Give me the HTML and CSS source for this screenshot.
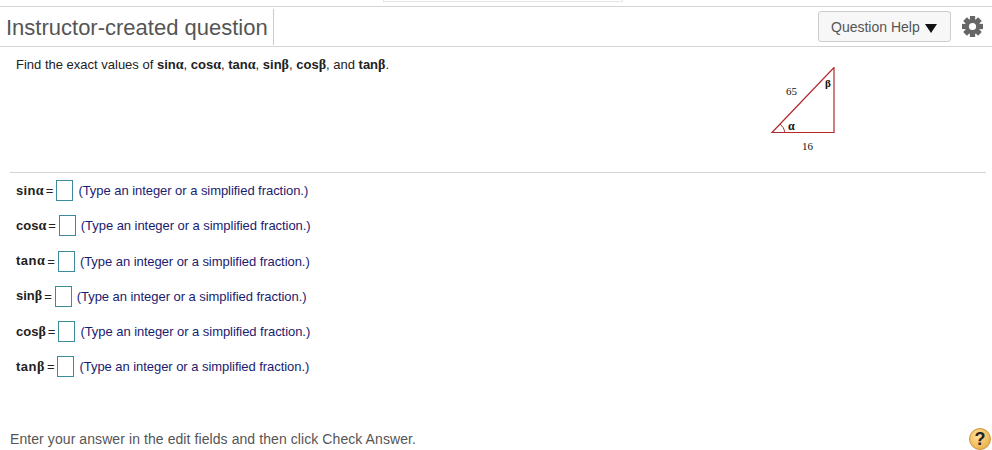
FILE: index.html
```html
<!DOCTYPE html>
<html lang="en">
<head>
  <meta charset="UTF-8">
  <title>Instructor-created question</title>
  <link rel="stylesheet" href="styles.css">
</head>
<body>
  <div class="topbar"><div class="tab"></div></div>

  <div class="header">
    <h1 class="title">Instructor-created question</h1>
    <div class="header-right">
      <button class="help-btn">Question Help <span class="caret"></span></button>
      <svg class="gear" width="21" height="21" viewBox="-12 -12 24 24">
        <g fill="#666">
          <rect x="-3" y="-12" width="6" height="6"/>
          <rect x="-3" y="-12" width="6" height="6" transform="rotate(45)"/>
          <rect x="-3" y="-12" width="6" height="6" transform="rotate(90)"/>
          <rect x="-3" y="-12" width="6" height="6" transform="rotate(135)"/>
          <rect x="-3" y="-12" width="6" height="6" transform="rotate(180)"/>
          <rect x="-3" y="-12" width="6" height="6" transform="rotate(225)"/>
          <rect x="-3" y="-12" width="6" height="6" transform="rotate(270)"/>
          <rect x="-3" y="-12" width="6" height="6" transform="rotate(315)"/>
        </g>
        <circle r="6.400" fill="none" stroke="#666" stroke-width="4.600"/>
      </svg>
    </div>
  </div>

  <div class="question">
    <p class="prompt">Find the exact values of <b>sin<span class="greek">&alpha;</span></b>, <b>cos<span class="greek">&alpha;</span></b>, <b>tan<span class="greek">&alpha;</span></b>, <b>sin<span class="greek">&beta;</span></b>, <b>cos<span class="greek">&beta;</span></b>, and <b>tan<span class="greek">&beta;</span></b>.</p>
    <svg class="triangle" width="70" height="92" viewBox="0 0 70 92">
      <path d="M3 65.500H65V.5Z" fill="none" stroke="#b3282d" stroke-width="1.2"/>
      <path d="M16 65.500A13 13 0 0 0 11 57" fill="none" stroke="#b3282d"/>
      <text x="17" y="28" class="tri-num">65</text>
      <text x="56" y="20" class="tri-beta">&beta;</text>
      <text x="19" y="63" class="tri-alpha">&alpha;</text>
      <text x="33" y="83" class="tri-num">16</text>
    </svg>
  </div>

  <div class="answers">
    <div class="answer"><b class="sin">sin<span class="greek">&alpha;</span></b><span class="eq">=</span><span class="box"></span><span class="hint">(Type an integer or a simplified fraction.)</span></div>
    <div class="answer"><b>cos<span class="greek">&alpha;</span></b><span class="eq">=</span><span class="box"></span><span class="hint">(Type an integer or a simplified fraction.)</span></div>
    <div class="answer"><b class="tan">tan<span class="greek">&alpha;</span></b><span class="eq">=</span><span class="box"></span><span class="hint">(Type an integer or a simplified fraction.)</span></div>
    <div class="answer"><b>sin<span class="greek">&beta;</span></b><span class="eq">=</span><span class="box"></span><span class="hint">(Type an integer or a simplified fraction.)</span></div>
    <div class="answer"><b>cos<span class="greek">&beta;</span></b><span class="eq">=</span><span class="box"></span><span class="hint">(Type an integer or a simplified fraction.)</span></div>
    <div class="answer"><b class="tan">tan<span class="greek">&beta;</span></b><span class="eq">=</span><span class="box"></span><span class="hint">(Type an integer or a simplified fraction.)</span></div>
  </div>

  <div class="footer">
    <span class="footer-text">Enter your answer in the edit fields and then click Check Answer.</span>
    <span class="help-dot">?</span>
  </div>
</body>
</html>
```

FILE: styles.css
```css
html, body {
  margin: 0;
  height: 450px;
  overflow: hidden;
}
body {
  font-family: "Liberation Sans", Arial, sans-serif;
  font-size: 13px;
  color: #222;
  background: #fff;
}
.greek {
  font-family: "Liberation Serif", serif;
  font-size: 14px;
}
.topbar {
  height: 6px;
  border-bottom: 1px solid #d4d4d4;
  display: flex;
  justify-content: center;
  padding-left: 13px;
}
.tab {
  width: 238px;
  height: 1px;
  border: 1px solid #e6e6e6;
  border-top: none;
}
.header {
  height: 39px;
  border-bottom: 1px solid #d4d4d4;
  display: flex;
  justify-content: space-between;
  align-items: center;
}
.title {
  margin: 0;
  padding: 0 5px 0 6px;
  height: 36px;
  line-height: 37px;
  font-size: 22px;
  font-weight: normal;
  color: #555;
  border-right: 1px solid #ccc;
}
.header-right {
  display: flex;
  align-items: center;
  padding-right: 9px;
}
.help-btn {
  width: 133px;
  height: 31px;
  padding: 0 0 0 12px;
  text-align: left;
  font-family: inherit;
  font-size: 14px;
  color: #555;
  background: #f7f7f7;
  border: 1px solid #ccc;
  border-radius: 3px;
  margin-right: 11px;
}
.caret {
  display: inline-block;
  width: 0;
  height: 0;
  border-left: 6.5px solid transparent;
  border-right: 6.5px solid transparent;
  border-top: 9px solid #111;
  vertical-align: -1px;
  margin-left: 1px;
}
.question {
  height: 125px;
  margin: 0 6px 0 10px;
  border-bottom: 1px solid #d4d4d4;
  display: flex;
  justify-content: space-between;
}
.prompt {
  margin: 10px 0 0 6px;
  line-height: 16px;
}
.triangle {
  margin: 20px 147px 0 0;
}
.tri-num {
  font-family: "Liberation Serif", serif;
  font-size: 11px;
  fill: #111;
}
.tri-alpha, .tri-beta {
  font-family: "Liberation Serif", serif;
  font-weight: bold;
  fill: #111;
}
.tri-alpha {
  font-size: 12px;
}
.tri-beta {
  font-size: 11px;
}
.answers {
  padding: 0.2px 0 0 16px;
}
.answer {
  height: 35.2px;
  display: flex;
  align-items: center;
}
.sin {
  letter-spacing: 0.3px;
}
.tan {
  letter-spacing: 0.5px;
}
.eq {
  margin: 0 3px 0 2px;
}
.box {
  width: 15px;
  height: 19px;
  border: 1px solid #3d8a9c;
  margin-right: 5px;
}
.hint {
  color: #1b1b70;
  letter-spacing: -0.05px;
}
.footer {
  margin-top: 44px;
  padding: 0 1px 0 10px;
  display: flex;
  justify-content: space-between;
  align-items: center;
  color: #555;
}
.footer-text {
  font-size: 14px;
  letter-spacing: 0.08px;
}
.help-dot {
  width: 22px;
  height: 22px;
  border-radius: 50%;
  background: radial-gradient(circle at 40% 35%, #ffe09a, #e6a536);
  border: 1px solid #c9963f;
  box-sizing: border-box;
  text-align: center;
  font-weight: bold;
  font-size: 18px;
  line-height: 21px;
  color: #222;
}
```
